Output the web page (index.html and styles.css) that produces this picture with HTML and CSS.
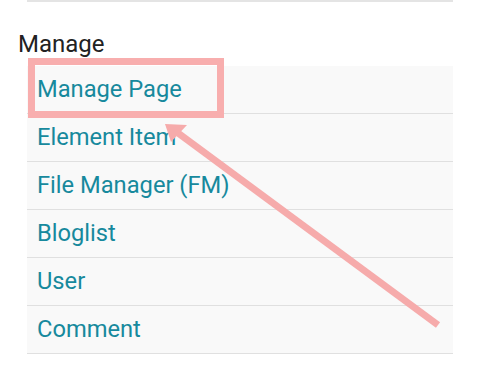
FILE: index.html
```html
<!DOCTYPE html>
<html>
<head>
<meta charset="utf-8">
<link rel="stylesheet" href="styles.css">
</head>
<body>
<div class="page">
  <div class="prev"></div>
  <section class="group">
    <h2 class="group-title">Manage</h2>
    <ul class="menu">
      <li class="menu-item"><a href="#">Manage Page</a></li>
      <li class="menu-item"><a href="#">Element Item</a></li>
      <li class="menu-item"><a href="#">File Manager (FM)</a></li>
      <li class="menu-item"><a href="#">Bloglist</a></li>
      <li class="menu-item"><a href="#">User</a></li>
      <li class="menu-item"><a href="#">Comment</a></li>
    </ul>
  </section>
  <svg class="annotation" width="480" height="383" viewBox="0 0 480 383">
    <rect x="31.5" y="61.5" width="189" height="53" fill="none" stroke="#f8aeae" stroke-width="7"/>
    <line x1="438" y1="325" x2="178" y2="133" stroke="#f6abab" stroke-width="7"/>
    <polygon points="165,124 187,125 171,142" fill="#f6abab"/>
  </svg>
</div>
</body>
</html>
```
FILE: styles.css
```css
html, body {
  margin: 0;
  padding: 0;
  background: #fff;
}
.page {
  position: relative;
  width: 480px;
  height: 383px;
  overflow: hidden;
  font-family: Roboto, "Liberation Sans", sans-serif;
}
.prev {
  margin-left: 27px;
  width: 426px;
  height: 2px;
  background: #e4e4e4;
}
.group {
  padding-left: 18px;
  padding-top: 28px;
}
.group-title {
  margin: 0 0 8px 0;
  font-size: 24px;
  line-height: 28px;
  font-weight: 400;
  color: #222;
}
.menu {
  list-style: none;
  margin: 0 0 0 9px;
  padding: 0;
  width: 426px;
  background: #f9f9f9;
}
.menu-item {
  padding: 10px 10px;
  font-size: 23.7px;
  line-height: 27px;
  border-bottom: 1px solid #e0e0e0;
}
.menu-item a {
  color: #17899d;
  text-decoration: none;
}
.annotation {
  position: absolute;
  left: 0;
  top: 0;
  pointer-events: none;
}
```
